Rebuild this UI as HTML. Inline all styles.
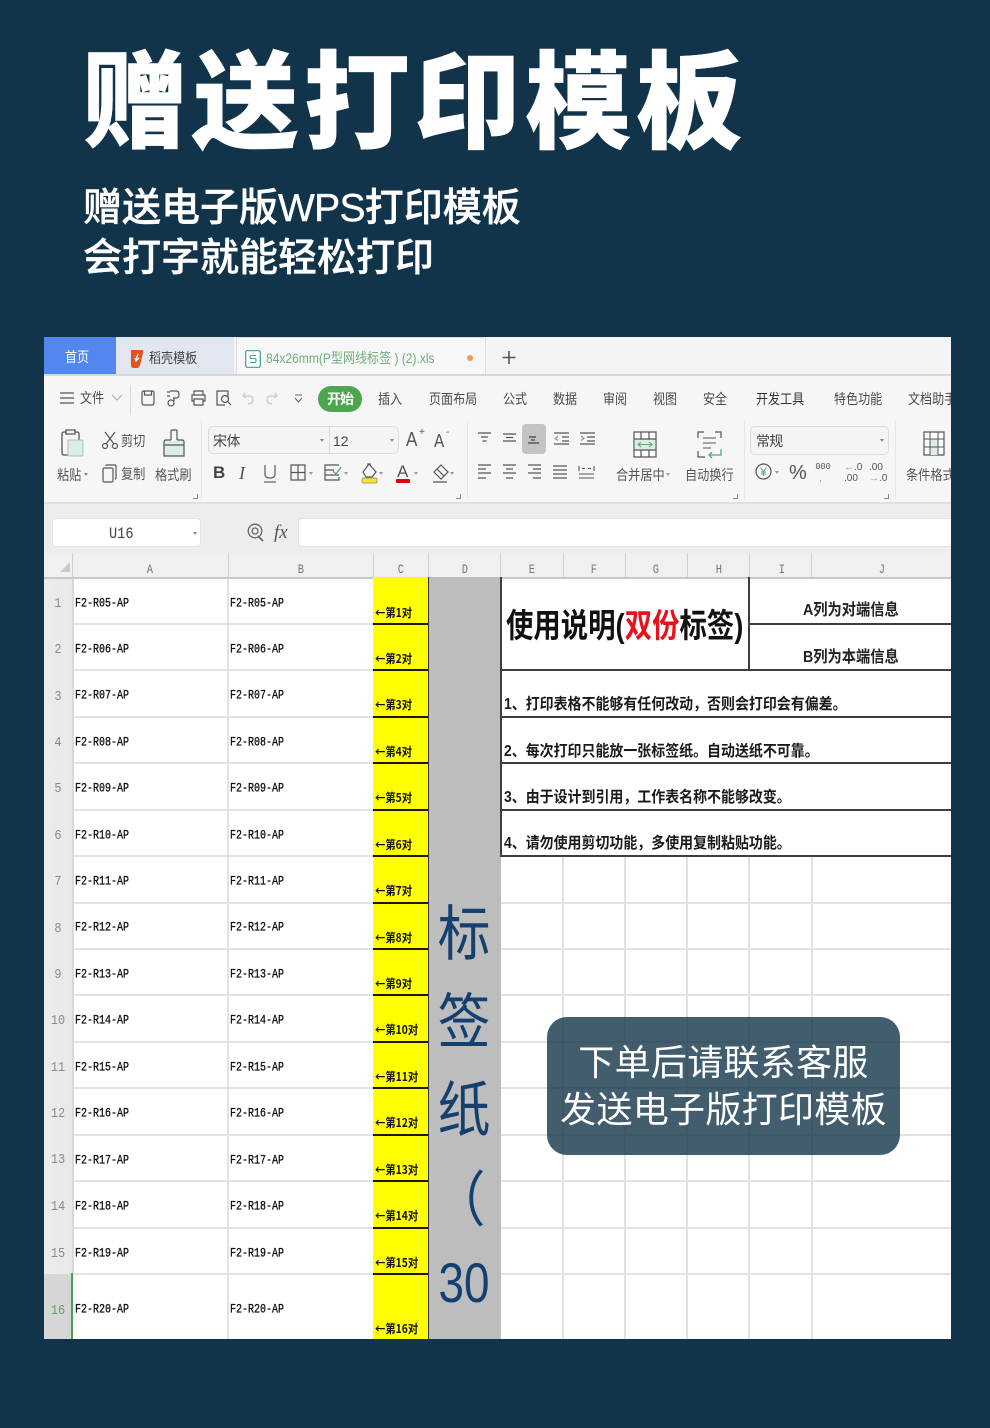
<!DOCTYPE html>
<html lang="zh-CN"><head><meta charset="utf-8"><title>赠送打印模板</title>
<style>
html,body{margin:0;padding:0;background:#11344a}
#p{position:relative;width:990px;height:1428px;background:#11344a;overflow:hidden;font-family:"Liberation Sans","Noto Sans CJK SC",sans-serif}
#p div{position:absolute;white-space:nowrap}
.t{color:#fff;font-weight:900;font-size:106px;line-height:120px;left:82px;top:44px;letter-spacing:4.8px;-webkit-text-stroke:.4px #fff}
.s{color:#fff;font-weight:500;font-size:39px;line-height:50px;left:83px;-webkit-text-stroke:.4px #fff}
#w{left:44px;top:337px;width:907px;height:1002px;background:#fff;overflow:hidden;filter:blur(.35px)}
.m{font-size:14px;line-height:18px;color:#4a4a4a;transform:scaleX(.86);transform-origin:0 50%}
.l{font-size:14px;line-height:18px;color:#555;transform:scaleX(.87);transform-origin:0 50%}
.h{font-family:"Liberation Mono",monospace;font-size:13px;line-height:14px;color:#777;top:226px;transform:scaleX(.8)}
.hl{background:#d0d0d0;width:1px;top:216px;height:24px}
.n{left:0;width:28px;text-align:center;font-family:"Liberation Mono",monospace;font-size:14px;line-height:16px;color:#8a8a8a;transform:translateY(1px) scaleX(.85)}
.c{font-family:"Liberation Mono",monospace;font-size:10px;line-height:12px;color:#111;-webkit-text-stroke:.25px #111;transform:translateY(2px) scaleY(1.25);transform-origin:0 50%}
.y{left:331px;font-family:"Noto Sans CJK SC",sans-serif;font-size:12px;line-height:14px;font-weight:700;color:#111;transform:scaleX(.86);transform-origin:0 50%}
.gl{left:0;width:907px;height:2px;background:#e2e2e2}
.vl{width:2px;background:#e2e2e2;top:240px;height:762px}
.bl{background:#3a3f44}
.yb{left:329px;width:55px;height:2px;background:#1a1a00}
.r{left:460px;font-size:15.5px;line-height:20px;font-weight:700;color:#1a1a1a;transform:scaleX(.9);transform-origin:0 50%}
.b{color:#14406f;text-align:center;left:385px;width:70px;font-size:60px;line-height:70px;transform:scaleX(.88)}
svg{position:absolute;overflow:visible}
svg *{vector-effect:non-scaling-stroke}
</style></head><body><div id="p">
<div class="t">赠送打印模板</div>
<div class="s" style="top:184px">赠送电子版<span style="letter-spacing:-.7px">WPS</span>打印模板</div>
<div class="s" style="top:234px">会打字就能轻松打印</div>

<div id="w">
<!-- tab bar -->
<div style="left:0;top:0;width:907px;height:38px;background:#f3f4f6"></div>
<div style="left:0;top:0;width:72px;height:37px;background:#5288ee"></div>
<div class="m" style="left:21px;top:11px;color:#fff">首页</div>
<div style="left:72px;top:0;width:118px;height:37px;background:#e2e6ef"></div>
<svg style="left:86px;top:12px" width="14" height="20"><path d="M1 1h11q2 0 1 3l-3 12q-1 3-3 3H4q-3 0-3-3z" fill="#e8511c"/><path d="M8 5L6 11M5 9l1 3 3-3" stroke="#fff" stroke-width="1.3" fill="none"/></svg>
<div class="m" style="left:105px;top:12px;color:#444">稻壳模板</div>
<div style="left:192px;top:0;width:250px;height:38px;background:#f7f7f7;box-sizing:border-box;border:1px solid #dcdee2;border-bottom:0"></div>
<svg style="left:201px;top:13px" width="16" height="18"><rect x=".7" y=".7" width="14.6" height="16.6" rx="1.5" fill="#fff" stroke="#3f9f8c" stroke-width="1.2"/><path d="M11 5.5H6q-1 0-1 1.5t1 1.500h4q1 0 1 2t-1 2H5" stroke="#3f9f8c" stroke-width="1.1" fill="none"/></svg>
<div class="m" style="left:222px;top:12px;color:#72ae7c">84x26mm(P型网线标签 ) (2).xls</div>
<div style="left:423px;top:18px;width:6px;height:6px;border-radius:3px;background:#ef9a5a"></div>
<svg style="left:458px;top:14px" width="14" height="14"><path d="M7 0v13M.5 6.500h13" stroke="#555" stroke-width="1.6" fill="none"/></svg>
<div style="left:0;top:37px;width:907px;height:2px;background:#d6d8dc"></div>

<!-- ribbon -->
<div style="left:0;top:39px;width:907px;height:128px;background:#f6f6f6"></div>
<svg style="left:16px;top:55px" width="15" height="12"><path d="M0 1h14M0 6h14M0 11h14" stroke="#555" stroke-width="1.2" fill="none"/></svg>
<div class="m" style="left:36px;top:52px">文件</div>
<svg style="left:68px;top:58px" width="10" height="6"><path d="M0 0l5 5 5-5" stroke="#aaa" stroke-width="1.1" fill="none"/></svg>
<div style="left:86px;top:48px;width:1px;height:30px;background:#d9d9d9"></div>
<svg style="left:97px;top:53px" width="14" height="16"><path d="M3 1h8q2 0 2 2v10q0 2-2 2H3q-2 0-2-2V3q0-2 2-2zM3.500 1v4h7V1" stroke="#555" stroke-width="1.2" fill="none"/></svg>
<svg style="left:122px;top:53px" width="14" height="17"><path d="M1 2h3M1 6h3M4 1h6q3 0 3 3.500T10 8H7M8 8v3" stroke="#555" stroke-width="1.2" fill="none"/><circle cx="5" cy="13" r="3" stroke="#555" stroke-width="1.2" fill="none"/></svg>
<svg style="left:147px;top:53px" width="15" height="16"><path d="M3 5V1h9v4M3 11H1V5h13v6h-2M3 9h9v6H3z" stroke="#555" stroke-width="1.2" fill="none"/></svg>
<svg style="left:172px;top:53px" width="16" height="16"><path d="M9 15H1V1h11v6" stroke="#555" stroke-width="1.2" fill="none"/><circle cx="9" cy="9" r="3.500" stroke="#555" stroke-width="1.2" fill="none"/><path d="M11.500 11.500L15 15" stroke="#555" stroke-width="1.2"/></svg>
<svg style="left:198px;top:55px" width="12" height="13"><path d="M3 1L1 4l3 2M1 4h6q4 0 4 4t-5 4" stroke="#c8c8c8" stroke-width="1.2" fill="none"/></svg>
<svg style="left:222px;top:55px" width="12" height="13"><path d="M9 1l2 3-3 2M11 4H5Q1 4 1 8t5 4" stroke="#c8c8c8" stroke-width="1.2" fill="none"/></svg>
<svg style="left:250px;top:57px" width="9" height="9"><path d="M1 1h7M1 4l3.500 4L8 4" stroke="#666" stroke-width="1.1" fill="none"/></svg>
<div style="left:274px;top:49px;width:44px;height:26px;border-radius:13px;background:#4ca64c;color:#fff;font-size:14px;line-height:26px;text-align:center;font-weight:700;letter-spacing:-1px">开始</div>
<div class="m" style="left:334px;top:53px">插入</div>
<div class="m" style="left:385px;top:53px">页面布局</div>
<div class="m" style="left:459px;top:53px">公式</div>
<div class="m" style="left:509px;top:53px">数据</div>
<div class="m" style="left:559px;top:53px">审阅</div>
<div class="m" style="left:609px;top:53px">视图</div>
<div class="m" style="left:659px;top:53px">安全</div>
<div class="m" style="left:712px;top:53px;color:#333">开发工具</div>
<div class="m" style="left:790px;top:53px">特色功能</div>
<div class="m" style="left:864px;top:53px">文档助手</div>

<!-- clipboard -->
<svg style="left:17px;top:92px" width="24" height="29"><path d="M5 3H3Q1 3 1 5v19q0 2 2 2h4" stroke="#555" stroke-width="1.3" fill="none"/><path d="M5 1h9v4H5zM14 3h2q2 0 2 2v6" stroke="#555" stroke-width="1.3" fill="none"/><rect x="7" y="11" width="15" height="16" rx="1" fill="#dceee4" stroke="#a5c7b3"/></svg>
<svg style="left:58px;top:94px" width="16" height="18"><path d="M3 1l9 12M13 1L4 13" stroke="#555" stroke-width="1.2" fill="none"/><circle cx="3" cy="15" r="2.500" stroke="#555" stroke-width="1.2" fill="none"/><circle cx="13" cy="15" r="2.500" stroke="#555" stroke-width="1.2" fill="none"/></svg>
<div class="l" style="left:77px;top:95px">剪切</div>
<svg style="left:118px;top:92px" width="24" height="28"><path d="M9 11V2q0-1 1-1h4q1 0 1 1v9" stroke="#555" stroke-width="1.2" fill="none"/><path d="M2 12h20v15H2z" fill="#dceee4"/><path d="M9 11H4q-2 0-2 2v3h20v-3q0-2-2-2h-5M2 16v11h20V16" stroke="#555" stroke-width="1.2" fill="none"/></svg>
<div class="l" style="left:13px;top:129px">粘贴</div>
<div style="left:40px;top:136px;width:0;height:0;border:2.500px solid transparent;border-top:3px solid #888"></div>
<svg style="left:58px;top:127px" width="15" height="19"><path d="M4 2q0-1 1-1h8q1 0 1 1v12q0 1-1 1" stroke="#555" stroke-width="1.2" fill="none"/><rect x="1" y="4" width="10" height="14" rx="1.500" fill="none" stroke="#555" stroke-width="1.2"/></svg>
<div class="l" style="left:77px;top:128px">复制</div>
<div class="l" style="left:111px;top:129px">格式刷</div>
<svg style="left:149px;top:157px" width="5" height="5"><path d="M4.500 0v4.500H0" stroke="#888" fill="none"/></svg>
<div style="left:157px;top:84px;width:1px;height:78px;background:#e6e6e6"></div>

<!-- font -->
<div style="left:164px;top:89px;width:191px;height:28px;box-sizing:border-box;background:#f4f4f4;border:1px solid #dcdcdc;border-radius:5px"></div>
<div style="left:285px;top:90px;width:1px;height:26px;background:#dcdcdc"></div>
<div style="left:169px;top:95px;font-size:14px;line-height:18px;color:#444;letter-spacing:-.5px">宋体</div>
<div style="left:276px;top:102px;border:2.500px solid transparent;border-top:3px solid #888"></div>
<div style="left:289px;top:95px;font-size:14px;line-height:18px;color:#444">12</div>
<div style="left:346px;top:102px;border:2.500px solid transparent;border-top:3px solid #888"></div>
<div style="left:362px;top:91px;font-size:20px;line-height:24px;color:#555;transform:scaleX(.85);transform-origin:0 0">A</div>
<div style="left:375px;top:90px;font-size:10px;line-height:12px;color:#555">+</div>
<div style="left:390px;top:92px;font-size:18px;line-height:24px;color:#555;transform:scaleX(.85);transform-origin:0 0">A</div>
<div style="left:402px;top:90px;font-size:10px;line-height:12px;color:#555">-</div>
<div style="left:169px;top:126px;font-size:17px;line-height:20px;font-weight:700;color:#444">B</div>
<div style="left:195px;top:126px;font-family:'Liberation Serif',serif;font-style:italic;font-size:18px;line-height:20px;color:#555">I</div>
<svg style="left:219px;top:128px" width="14" height="18"><path d="M2 0v9q0 4 5 4t5-4V0M1 17h12" stroke="#5a6a66" stroke-width="1.3" fill="none"/></svg>
<svg style="left:246px;top:127px" width="16" height="17"><path d="M1 1h14v15H1zM8 1v15M1 8.500h14" stroke="#555" stroke-width="1.2" fill="none"/></svg>
<div style="left:265px;top:135px;border:2.500px solid transparent;border-top:3px solid #999"></div>
<svg style="left:280px;top:127px" width="18" height="17"><path d="M15 1H1v15h14v-3M1 6h9M1 11h14" stroke="#555" stroke-width="1.2" fill="none"/><path d="M9 7l3 3 5-7" stroke="#5aa77a" stroke-width="1.300" fill="none"/></svg>
<div style="left:300px;top:135px;border:2.500px solid transparent;border-top:3px solid #999"></div>
<svg style="left:317px;top:126px" width="17" height="21"><path d="M8 1l7 8-4 5H5L2 9z" stroke="#555" stroke-width="1.2" fill="none"/><path d="M6 1h4" stroke="#555"/><rect x="1" y="15" width="15" height="5" rx="1.500" fill="#f5e430" stroke="#8a8a50" stroke-width=".7"/></svg>
<div style="left:335px;top:135px;border:2.500px solid transparent;border-top:3px solid #999"></div>
<div style="left:353px;top:125px;font-size:17px;line-height:19px;color:#555">A</div>
<div style="left:352px;top:142px;width:14px;height:4px;background:#d8090f;border-radius:1px"></div>
<div style="left:370px;top:135px;border:2.500px solid transparent;border-top:3px solid #999"></div>
<svg style="left:388px;top:127px" width="17" height="19"><path d="M9 1l7 7-7 7-7-7zM5 5l7 7M1 18h14" stroke="#555" stroke-width="1.2" fill="none"/></svg>
<div style="left:406px;top:135px;border:2.500px solid transparent;border-top:3px solid #999"></div>
<svg style="left:412px;top:157px" width="5" height="5"><path d="M4.500 0v4.500H0" stroke="#888" fill="none"/></svg>
<div style="left:423px;top:84px;width:1px;height:78px;background:#e6e6e6"></div>

<!-- align -->
<div style="left:478px;top:87px;width:24px;height:30px;border-radius:4px;background:#c4c4c4"></div>
<svg style="left:433px;top:95px" width="150" height="12"><g stroke="#555" stroke-width="1.2" fill="none"><path d="M1 1h13M4 5h7M5.500 9h4"/><path d="M26 2h13M29 5.500h7M26 9h13"/><path d="M52 5h7M54 8h4M51 11h11" stroke="#444"/><path d="M77 1h15M85 5h7M85 9h7M77 12h15"/><path d="M81 4l-3 2.500 3 2" stroke="#6aaa88"/><path d="M103 1h15M103 12h15M110 5h8M110 9h8"/><path d="M104 4l3 2.500-3 2" stroke="#6aaa88"/></g></svg>
<svg style="left:433px;top:127px" width="150" height="17"><g stroke="#555" stroke-width="1.2" fill="none"><path d="M1 1h13M1 5h8M1 9h13M1 14h8"/><path d="M26 1h13M29 5h7M26 9h13M29 14h7"/><path d="M51 1h13M56 5h8M51 9h13M56 14h8"/><path d="M76 2h14M76 6h14M76 10h14M76 14h14"/><path d="M102 2v5M117 2v5M105 4.500h3M111 4.500h3M102 10h15M102 14h15" stroke-width="1.1"/></g></svg>
<svg style="left:589px;top:94px" width="24" height="28"><rect x="1" y="1" width="22" height="25" fill="#fff" stroke="#555" stroke-width="1.2"/><rect x="1.500" y="8" width="21" height="11" fill="#dceee4"/><path d="M1 8h22M1 19h22M8 1v7M16 1v7M8 19v7M16 19v7" stroke="#555" stroke-width="1.2" fill="none"/><path d="M5 13.500h14M8 11l-3 2.500L8 16M16 11l3 2.500-3 2.500" stroke="#5aa77a" stroke-width="1.100" fill="none"/></svg>
<div class="l" style="left:572px;top:129px">合并居中</div>
<div style="left:622px;top:136px;border:2.500px solid transparent;border-top:3px solid #999"></div>
<svg style="left:653px;top:94px" width="25" height="28"><path d="M7 1H1v6M18 1h6v6M1 20v6h7" stroke="#555" stroke-width="1.200" fill="none"/><path d="M6 7h13M6 12h13M6 17h8" stroke="#555" stroke-width="1.100" fill="none"/><path d="M24 18v6H12M15 21l-3 3 3 3" stroke="#5aa77a" stroke-width="1.300" fill="none"/></svg>
<div class="l" style="left:641px;top:129px">自动换行</div>
<svg style="left:689px;top:157px" width="5" height="5"><path d="M4.500 0v4.500H0" stroke="#888" fill="none"/></svg>
<div style="left:700px;top:84px;width:1px;height:78px;background:#e6e6e6"></div>

<!-- number -->
<div style="left:706px;top:89px;width:139px;height:29px;box-sizing:border-box;background:#f4f4f4;border:1px solid #dcdcdc;border-radius:5px"></div>
<div style="left:712px;top:95px;font-size:14px;line-height:18px;color:#444;letter-spacing:-.8px">常规</div>
<div style="left:836px;top:102px;border:2.500px solid transparent;border-top:3px solid #888"></div>
<svg style="left:711px;top:126px" width="17" height="17"><circle cx="8.500" cy="8.500" r="7.500" stroke="#555" stroke-width="1.200" fill="none"/><path d="M5.500 4.500l3 4 3-4M8.500 8.500v4.500M6 9h5M6 11h5" stroke="#5aa77a" stroke-width="1" fill="none"/></svg>
<div style="left:731px;top:134px;border:2.500px solid transparent;border-top:3px solid #999"></div>
<div style="left:745px;top:124px;font-size:20px;line-height:24px;color:#555">%</div>
<div style="left:771px;top:125px;font-family:'Liberation Mono',monospace;font-size:9px;line-height:11px;color:#555;transform:scaleX(.95)">000</div>
<div style="left:775px;top:136px;font-size:9px;line-height:10px;color:#5aa77a">,</div>
<div style="left:800px;top:125px;font-size:10px;line-height:11px;color:#555"><span style="color:#6aaa88">←</span>.0</div>
<div style="left:800px;top:136px;font-size:10px;line-height:11px;color:#555">.00</div>
<div style="left:825px;top:125px;font-size:10px;line-height:11px;color:#555">.00</div>
<div style="left:825px;top:136px;font-size:10px;line-height:11px;color:#555"><span style="color:#6aaa88">→</span>.0</div>
<svg style="left:840px;top:157px" width="5" height="5"><path d="M4.500 0v4.500H0" stroke="#888" fill="none"/></svg>
<div style="left:851px;top:84px;width:1px;height:78px;background:#e6e6e6"></div>
<svg style="left:879px;top:94px" width="22" height="25"><rect x="1" y="1" width="20" height="23" fill="#fff" stroke="#555" stroke-width="1.200"/><rect x="7" y="8" width="8" height="16" fill="#dceee4"/><path d="M1 8h20M1 16h20M7 1v23M15 1v23" stroke="#555" stroke-width="1" fill="none"/></svg>
<div class="l" style="left:862px;top:129px">条件格式</div>

<!-- formula bar -->
<div style="left:0;top:165px;width:907px;height:2px;background:#e0e0e0"></div>
<div style="left:0;top:167px;width:907px;height:49px;background:#ededed"></div>
<div style="left:8px;top:181px;width:149px;height:29px;box-sizing:border-box;background:#fff;border:1px solid #e2e2e2;border-radius:4px"></div>
<div style="left:65px;top:188px;font-family:'Liberation Mono',monospace;font-size:16px;line-height:18px;color:#444;transform:scaleX(.85);transform-origin:0 0">U16</div>
<div style="left:149px;top:195px;border:2.500px solid transparent;border-top:3px solid #888"></div>
<svg style="left:203px;top:186px" width="18" height="20"><circle cx="8" cy="8" r="6.800" stroke="#666" stroke-width="1.300" fill="none"/><circle cx="8" cy="8" r="3" stroke="#666" stroke-width="1.300" fill="none"/><path d="M11 13l5 5" stroke="#666" stroke-width="1.800"/></svg>
<div style="left:230px;top:185px;font-family:'Liberation Serif',serif;font-style:italic;font-size:19px;line-height:22px;color:#555">fx</div>
<div style="left:254px;top:181px;width:660px;height:29px;box-sizing:border-box;background:#fff;border:1px solid #e2e2e2;border-radius:4px"></div>

<!-- column header -->
<div style="left:0;top:216px;width:907px;height:24px;background:#f0f0f0"></div>
<svg style="left:16px;top:225px" width="11" height="11"><path d="M10 0v10H0z" fill="#c9c9c9"/></svg>
<div class="hl" style="left:28px"></div><div class="hl" style="left:184px"></div><div class="hl" style="left:329px"></div><div class="hl" style="left:384px"></div><div class="hl" style="left:456px"></div><div class="hl" style="left:519px"></div><div class="hl" style="left:581px"></div><div class="hl" style="left:643px"></div><div class="hl" style="left:705px"></div><div class="hl" style="left:767px"></div>
<div class="h" style="left:102px">A</div><div class="h" style="left:253px">B</div><div class="h" style="left:353px">C</div><div class="h" style="left:417px">D</div><div class="h" style="left:484px">E</div><div class="h" style="left:546px">F</div><div class="h" style="left:608px">G</div><div class="h" style="left:671px">H</div><div class="h" style="left:734px">I</div><div class="h" style="left:834px">J</div>

<!-- grid -->
<div class="gl" style="top:286px"></div><div class="gl" style="top:332px"></div><div class="gl" style="top:379px"></div><div class="gl" style="top:425px"></div><div class="gl" style="top:472px"></div><div class="gl" style="top:518px"></div><div class="gl" style="top:565px"></div><div class="gl" style="top:611px"></div><div class="gl" style="top:657px"></div><div class="gl" style="top:704px"></div><div class="gl" style="top:750px"></div><div class="gl" style="top:797px"></div><div class="gl" style="top:843px"></div><div class="gl" style="top:890px"></div><div class="gl" style="top:936px"></div>
<div class="vl" style="left:183px"></div>
<div class="vl" style="left:518px;top:518px;height:484px"></div><div class="vl" style="left:580px;top:518px;height:484px"></div><div class="vl" style="left:642px;top:518px;height:484px"></div><div class="vl" style="left:704px;top:518px;height:484px"></div><div class="vl" style="left:767px;top:518px;height:484px"></div>
<div style="left:457px;top:240px;width:450px;height:279px;background:#fff"></div>

<!-- gutter -->
<div style="left:0;top:240px;width:28px;height:697px;background:linear-gradient(90deg,#ececec,#e8e8e8)"></div>
<div style="left:28px;top:240px;width:2px;height:697px;background:#d8d8d8"></div>
<div style="left:0;top:937px;width:27px;height:65px;background:#d6d6d6"></div>
<div style="left:27px;top:936px;width:2px;height:66px;background:#4a9e55"></div>
<div style="left:0;top:240px;width:907px;height:2px;background:#c8c8c8"></div>

<!-- yellow & grey cols -->
<div style="left:329px;top:240px;width:55px;height:762px;background:#ffff00"></div>
<div style="left:384px;top:240px;width:73px;height:762px;background:#bdbdbd;border-left:1px solid #333;box-sizing:border-box"></div>
<div class="yb" style="top:286px"></div><div class="yb" style="top:332px"></div><div class="yb" style="top:379px"></div><div class="yb" style="top:425px"></div><div class="yb" style="top:472px"></div><div class="yb" style="top:518px"></div><div class="yb" style="top:565px"></div><div class="yb" style="top:611px"></div><div class="yb" style="top:657px"></div><div class="yb" style="top:704px"></div><div class="yb" style="top:750px"></div><div class="yb" style="top:797px"></div><div class="yb" style="top:843px"></div><div class="yb" style="top:890px"></div><div class="yb" style="top:936px"></div>

<!-- row numbers -->
<div class="n" style="top:258px">1</div><div class="n" style="top:304px">2</div><div class="n" style="top:351px">3</div><div class="n" style="top:397px">4</div><div class="n" style="top:443px">5</div><div class="n" style="top:490px">6</div><div class="n" style="top:536px">7</div><div class="n" style="top:583px">8</div><div class="n" style="top:629px">9</div><div class="n" style="top:675px">10</div><div class="n" style="top:722px">11</div><div class="n" style="top:768px">12</div><div class="n" style="top:814px">13</div><div class="n" style="top:861px">14</div><div class="n" style="top:908px">15</div><div class="n" style="top:965px;color:#5f9e6a">16</div>

<!-- column A -->
<div class="c" style="left:31px;top:260px">F2-R05-AP</div><div class="c" style="left:31px;top:306px">F2-R06-AP</div><div class="c" style="left:31px;top:352px">F2-R07-AP</div><div class="c" style="left:31px;top:399px">F2-R08-AP</div><div class="c" style="left:31px;top:445px">F2-R09-AP</div><div class="c" style="left:31px;top:492px">F2-R10-AP</div><div class="c" style="left:31px;top:538px">F2-R11-AP</div><div class="c" style="left:31px;top:584px">F2-R12-AP</div><div class="c" style="left:31px;top:631px">F2-R13-AP</div><div class="c" style="left:31px;top:677px">F2-R14-AP</div><div class="c" style="left:31px;top:724px">F2-R15-AP</div><div class="c" style="left:31px;top:770px">F2-R16-AP</div><div class="c" style="left:31px;top:817px">F2-R17-AP</div><div class="c" style="left:31px;top:863px">F2-R18-AP</div><div class="c" style="left:31px;top:910px">F2-R19-AP</div><div class="c" style="left:31px;top:966px">F2-R20-AP</div>
<!-- column B -->
<div class="c" style="left:186px;top:260px">F2-R05-AP</div><div class="c" style="left:186px;top:306px">F2-R06-AP</div><div class="c" style="left:186px;top:352px">F2-R07-AP</div><div class="c" style="left:186px;top:399px">F2-R08-AP</div><div class="c" style="left:186px;top:445px">F2-R09-AP</div><div class="c" style="left:186px;top:492px">F2-R10-AP</div><div class="c" style="left:186px;top:538px">F2-R11-AP</div><div class="c" style="left:186px;top:584px">F2-R12-AP</div><div class="c" style="left:186px;top:631px">F2-R13-AP</div><div class="c" style="left:186px;top:677px">F2-R14-AP</div><div class="c" style="left:186px;top:724px">F2-R15-AP</div><div class="c" style="left:186px;top:770px">F2-R16-AP</div><div class="c" style="left:186px;top:817px">F2-R17-AP</div><div class="c" style="left:186px;top:863px">F2-R18-AP</div><div class="c" style="left:186px;top:910px">F2-R19-AP</div><div class="c" style="left:186px;top:966px">F2-R20-AP</div>
<!-- column C -->
<div class="y" style="top:269px">←第1对</div><div class="y" style="top:315px">←第2对</div><div class="y" style="top:361px">←第3对</div><div class="y" style="top:408px">←第4对</div><div class="y" style="top:454px">←第5对</div><div class="y" style="top:501px">←第6对</div><div class="y" style="top:547px">←第7对</div><div class="y" style="top:594px">←第8对</div><div class="y" style="top:640px">←第9对</div><div class="y" style="top:686px">←第10对</div><div class="y" style="top:733px">←第11对</div><div class="y" style="top:779px">←第12对</div><div class="y" style="top:826px">←第13对</div><div class="y" style="top:872px">←第14对</div><div class="y" style="top:919px">←第15对</div><div class="y" style="top:985px">←第16对</div>

<!-- column D -->
<div class="b" style="top:563px">标</div>
<div class="b" style="top:651px">签</div>
<div class="b" style="top:739px">纸</div>
<div class="b" style="top:829px;left:380px">（</div>
<div class="b" style="top:911px;font-size:56px;transform:scaleX(.82)">30</div>

<!-- instructions -->
<div class="bl" style="left:456px;top:240px;width:2px;height:279px"></div>
<div class="bl" style="left:704px;top:240px;width:2px;height:93px"></div>
<div class="bl" style="left:704px;top:286px;width:203px;height:2px"></div>
<div class="bl" style="left:456px;top:332px;width:451px;height:2px"></div>
<div class="bl" style="left:456px;top:379px;width:451px;height:2px"></div>
<div class="bl" style="left:456px;top:425px;width:451px;height:2px"></div>
<div class="bl" style="left:456px;top:472px;width:451px;height:2px"></div>
<div class="bl" style="left:456px;top:518px;width:451px;height:2px"></div>
<div style="left:462px;top:267px;font-size:33px;line-height:44px;font-weight:700;color:#111;transform:scaleX(.83);transform-origin:0 50%">使用说明(<span style="color:#e8101a">双份</span>标签)</div>
<div style="left:759px;top:264px;font-size:16px;line-height:20px;font-weight:700;color:#222;transform:scaleX(.89);transform-origin:0 50%">A列为对端信息</div>
<div style="left:759px;top:311px;font-size:16px;line-height:20px;font-weight:700;color:#222;transform:scaleX(.89);transform-origin:0 50%">B列为本端信息</div>
<div class="r" style="top:358px">1、打印表格不能够有任何改动，否则会打印会有偏差。</div>
<div class="r" style="top:405px">2、每次打印只能放一张标签纸。自动送纸不可靠。</div>
<div class="r" style="top:451px">3、由于设计到引用，工作表名称不能够改变。</div>
<div class="r" style="top:497px">4、请勿使用剪切功能，多使用复制粘贴功能。</div>
</div>

<!-- popup -->
<div style="left:547px;top:1017px;width:353px;height:138px;border-radius:20px;background:rgba(17,52,74,.8)"></div>
<div style="left:547px;width:353px;top:1040px;text-align:center;color:#fff;font-size:36px;line-height:46px;letter-spacing:.3px">下单后请联系客服</div>
<div style="left:547px;width:353px;top:1087px;text-align:center;color:#fff;font-size:36px;line-height:46px;letter-spacing:.3px">发送电子版打印模板</div>
</div></body></html>
